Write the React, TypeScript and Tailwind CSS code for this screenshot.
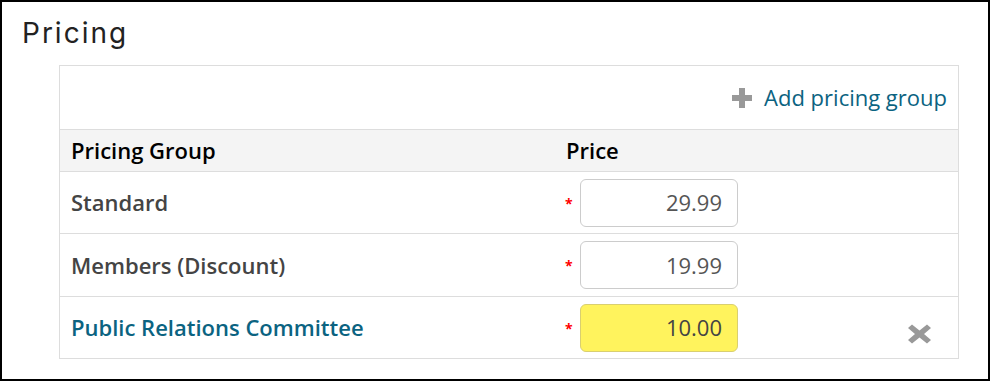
import React from 'react';

type Row = {
  name: string;
  price: string;
  custom?: boolean;
  height: string;
};

const rows: Row[] = [
  { name: 'Standard', price: '29.99', height: 'h-[62px]' },
  { name: 'Members (Discount)', price: '19.99', height: 'h-[63px]' },
  { name: 'Public Relations Committee', price: '10.00', custom: true, height: 'h-[61px]' },
];

const PlusIcon = () => (
  <svg width="22" height="22" viewBox="0 0 22 22" className="text-[#999]">
    <path d="M8 1h6v7h7v6h-7v7H8v-7H1V8h7z" fill="currentColor" />
  </svg>
);

const RemoveIcon = () => (
  <svg width="25" height="20" viewBox="0 0 25 20" className="text-[#999]">
    <path
      d="M1 4L5 0.5 12.5 6.5 20 0.5 24 4 17 10 24 16 20 19.5 12.5 13.5 5 19.5 1 16 8 10z"
      fill="currentColor"
    />
  </svg>
);

export default function App() {
  return (
    <div className="w-[990px] h-[381px] border-2 border-black bg-white font-['Open_Sans',sans-serif]">
      <h2 className="pl-[20px] pt-[14px] h-[63px] text-[28px] leading-[34px] tracking-[2px] text-[#222] font-['Inter',sans-serif]">
        Pricing
      </h2>

      <div className="ml-[57px] w-[900px] border border-[#ddd]">
        {/* Add group */}
        <div className="h-[64px] flex items-center justify-end pr-[11px] border-b border-[#ddd]">
          <a href="#" className="flex items-center gap-[11px] text-[22px] text-[#0b6381]">
            <PlusIcon />
            <span>Add pricing group</span>
          </a>
        </div>

        {/* Header */}
        <div className="h-[42px] flex items-center bg-[#f4f4f4] border-b border-[#ddd] text-[22px] font-semibold text-black">
          <div className="w-[495px] pl-[11px]">Pricing Group</div>
          <div className="flex-1 pl-[11px]">Price</div>
        </div>

        {rows.map((row, i) => (
          <div
            key={row.name}
            className={`${row.height} flex items-center text-[22px] font-semibold ${
              i < rows.length - 1 ? 'border-b border-[#ddd]' : ''
            }`}
          >
            <div className={`w-[495px] pl-[11px] ${row.custom ? 'text-[#0b6381]' : 'text-[#444]'}`}>
              {row.name}
            </div>
            <div className="flex items-center pl-[10px]">
              <span className="w-[10px] text-[#f00] text-[14px] leading-none font-bold mt-[2px]">*</span>
              <div
                className={`ml-[5px] w-[158px] h-[48px] rounded-[6px] border flex items-center justify-end pr-[15px] text-[22px] font-normal ${
                  row.custom
                    ? 'bg-[#fff35d] border-[#d9cf70] text-[#444]'
                    : 'bg-white border-[#ccc] text-[#555]'
                }`}
              >
                {row.price}
              </div>
            </div>
            {row.custom && (
              <div className="ml-[169px] mt-[12px]">
                <RemoveIcon />
              </div>
            )}
          </div>
        ))}
      </div>
    </div>
  );
}
